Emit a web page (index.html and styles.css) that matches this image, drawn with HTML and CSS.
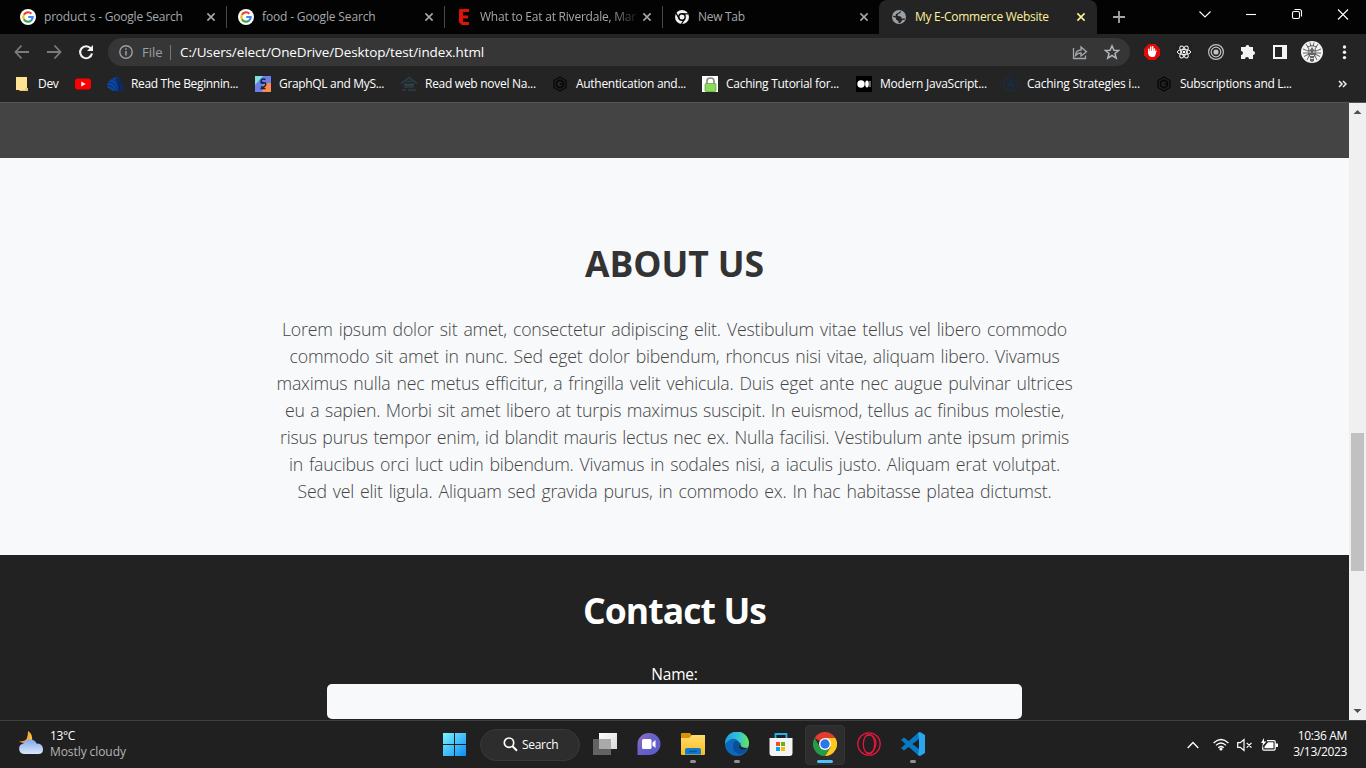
FILE: index.html
```html
<!DOCTYPE html>
<html lang="en">
<head>
<meta charset="utf-8">
<title>My E-Commerce Website</title>
<link rel="stylesheet" href="styles.css">
</head>
<body>
<svg class="defs" width="0" height="0">
  <defs>
    <linearGradient id="win" x1="0" y1="0" x2="1" y2="1"><stop offset="0" stop-color="#7df3ff"/><stop offset="1" stop-color="#0a8df5"/></linearGradient>
    <linearGradient id="cloud" x1="0" y1="0" x2="0" y2="1"><stop offset="0" stop-color="#7fa9ee"/><stop offset="1" stop-color="#dbe7fb"/></linearGradient>
    <linearGradient id="moon" x1="0" y1="0" x2="1" y2="0"><stop offset="0" stop-color="#f57c0b"/><stop offset="1" stop-color="#fbc543"/></linearGradient>
    <linearGradient id="chat" x1="0" y1="0" x2="1" y2="1"><stop offset="0" stop-color="#9b6fb5"/><stop offset=".4" stop-color="#6c62c9"/><stop offset="1" stop-color="#5858cf"/></linearGradient>
    <linearGradient id="folder" x1="0" y1="0" x2="0" y2="1"><stop offset="0" stop-color="#ffdc6e"/><stop offset="1" stop-color="#fbbc1c"/></linearGradient>
    <linearGradient id="edge" x1="0" y1="0" x2="1" y2="0"><stop offset="0" stop-color="#1c9be0"/><stop offset=".6" stop-color="#35c6d3"/><stop offset="1" stop-color="#6ce84d"/></linearGradient>
    <linearGradient id="tv" x1="0" y1="0" x2="1" y2="1"><stop offset="0" stop-color="#ffffff"/><stop offset="1" stop-color="#d9d9d9"/></linearGradient>
    <symbol id="google" viewBox="0 0 16 16"><circle cx="8" cy="8" r="8" fill="#fff"/><g fill="none" stroke-width="2.2"><path d="M3.9 5.7A4.7 4.7 0 0 1 11.4 4.7" stroke="#ea4335"/><path d="M3.9 5.7A4.7 4.7 0 0 0 3.9 10.3" stroke="#fbbc05"/><path d="M3.9 10.3A4.7 4.7 0 0 0 11 11.6" stroke="#34a853"/><path d="M11 11.6A4.7 4.7 0 0 0 12.7 8H8.2" stroke="#4285f4"/></g></symbol>
    <symbol id="x" viewBox="0 0 10 10"><path d="M1.4 1.4l7.2 7.2M8.6 1.4l-7.2 7.2" stroke="currentColor" stroke-width="1.6"/></symbol>
    <symbol id="hex" viewBox="0 0 16 16"><g fill="none" stroke="#080808"><path d="M8 1l6 3.5v7L8 15l-6-3.500v-7z" stroke-width="1.3"/><path d="M8 4l3.400 2v4L8 12l-3.400-2V6z" stroke-width="1.8"/><path d="M8 8h4" stroke-width="1.4"/></g></symbol>
  </defs>
</svg>
<div class="screen">
  <header class="tabs">
    <div class="tab"><svg class="fav" width="16" height="16"><use href="#google"/></svg><span class="tab-title t1">product s - Google Search</span><svg class="close" width="10" height="10"><use href="#x"/></svg></div>
    <div class="tab"><svg class="fav" width="16" height="16"><use href="#google"/></svg><span class="tab-title t2">food - Google Search</span><svg class="close" width="10" height="10"><use href="#x"/></svg></div>
    <div class="tab"><svg class="fav" width="16" height="16" viewBox="0 0 16 16"><path d="M3 1l1-1h9v3H7v3.500h5v3H7V13h6v3H6l-3-2.500z" fill="#dc1407"/></svg><span class="tab-title t3 fade">What to Eat at Riverdale, Mar</span><svg class="close" width="10" height="10"><use href="#x"/></svg></div>
    <div class="tab last"><svg class="fav" width="16" height="16" viewBox="0 0 16 16"><circle cx="8" cy="8" r="7" fill="#f1f3f4"/><g fill="none" stroke="#050505"><circle cx="8" cy="8" r="3.2" stroke-width="1.4"/><path d="M8 4.8h6.500M5.200 9.600L2 4M10.800 9.600L7.500 15" stroke-width="1.3"/></g></svg><span class="tab-title t4">New Tab</span><svg class="close" width="10" height="10"><use href="#x"/></svg></div>
    <div class="tab active"><svg class="fav" width="16" height="16" viewBox="0 0 16 16"><circle cx="8" cy="8" r="7" fill="#9aa0a6"/><path d="M9.500 1.800q1 2-1 2.700-2 .3-2 2 .5 1 2.500.7 2 .3 1.500 2.300h3.500l-.5 1.500q-2.500-1-3 1.500l-1.500 1.500H7.500q.5-2-1-2.500-2-.3-1.500-2.500L1.800 7.500l.5-.8 2.200.5q0-3 2.500-3z" fill="#242424"/></svg><span class="tab-title t5">My E-Commerce Website</span><svg class="close" width="10" height="10"><use href="#x"/></svg></div>
    <svg class="plus" width="12" height="12" viewBox="0 0 12 12"><path d="M6 0v12M0 6h12" stroke="#a4a8ad" stroke-width="1.8"/></svg>
    <div class="win-controls">
      <svg viewBox="0 0 46 34"><path d="M17.500 11.500l5.500 5.500 5.500-5.500" /></svg>
      <svg viewBox="0 0 46 34"><path d="M18 14.500h10"/></svg>
      <svg viewBox="0 0 46 34"><rect x="18.500" y="11.500" width="7" height="7" rx="1.500"/><path d="M20.500 9.500h5q2 0 2 2v5"/></svg>
      <svg viewBox="0 0 46 34"><path d="M18 9.500l10 10M28 9.500l-10 10"/></svg>
    </div>
  </header>
  <div class="toolbar">
    <div class="nav">
      <svg viewBox="0 0 32 32"><path d="M23 16H10M15.500 9.500L9.500 16l6 6.500" fill="none" stroke="#7b7b7b" stroke-width="1.800"/></svg>
      <svg viewBox="0 0 32 32"><path d="M9 16h13M16.500 9.500l6 6.500-6 6.500" fill="none" stroke="#7b7b7b" stroke-width="1.800"/></svg>
      <svg viewBox="0 0 32 32"><path d="M20.800 12.400A6 6 0 1 0 22 17.500" fill="none" stroke="#f1f3f4" stroke-width="2.100"/><path d="M23 9v6h-6z" fill="#f1f3f4"/></svg>
    </div>
    <div class="omnibox">
      <svg width="14" height="14" viewBox="0 0 14 14"><circle cx="7" cy="7" r="6.200" fill="none" stroke="#9aa0a6" stroke-width="1.400"/><path d="M7 6v4.500M7 3.300v1.500" stroke="#9aa0a6" stroke-width="1.500"/></svg>
      <span class="scheme">File</span>
      <span class="url">C:/Users/elect/OneDrive/Desktop/test/index.html</span>
      <div class="omni-actions">
        <svg viewBox="0 0 32 32"><path d="M9.500 12v10.500h12v-3M11.500 19.500q.5-5.500 5.500-5.500v-3l5.500 4.700-5.500 4.300v-3q-3-.2-5.500 2.500z" fill="none" stroke="#a5a8ab" stroke-width="1.300"/></svg>
        <svg viewBox="0 0 32 32"><path d="M16 9.800l1.900 4.400 4.700.3-3.600 3 1.200 4.600-4.200-2.600-4.200 2.600 1.200-4.600-3.600-3 4.700-.3z" fill="none" stroke="#b4b7ba" stroke-width="1.500"/></svg>
      </div>
    </div>
    <div class="extensions">
      <svg viewBox="0 0 32 32"><path d="M12.700 8h6.600l4.700 4.700v6.600L19.300 24h-6.600L8 19.300v-6.600z" fill="#e0090b"/><path d="M12.800 17.200v-4M14.700 16v-5M16.700 16v-5.200M18.500 17v-4" stroke="#fff" stroke-width="1.500" stroke-linecap="round"/><path d="M12.100 15h7.200l1.500-.7-1.500 5.300q-.5 1.400-2 1.400h-2q-2.800-.6-3.200-4z" fill="#fff"/></svg>
      <svg viewBox="0 0 32 32"><rect x="8" y="8" width="16" height="16" fill="#202020"/><g fill="none" stroke="#f4f4f4"><ellipse cx="16" cy="16" rx="6.700" ry="2.600"/><ellipse cx="16" cy="16" rx="6.700" ry="2.600" transform="rotate(60 16 16)"/><ellipse cx="16" cy="16" rx="6.700" ry="2.600" transform="rotate(120 16 16)"/></g><circle cx="16" cy="16" r="1.300" fill="#fff"/></svg>
      <svg viewBox="0 0 32 32"><g fill="none" stroke="#c2c2c2"><circle cx="16" cy="16" r="7.400" stroke-width="1.200"/><circle cx="16" cy="16" r="4.800" stroke-width="1.200"/></g><circle cx="16" cy="16" r="2.600" fill="#c2c2c2"/></svg>
      <svg viewBox="0 0 32 32"><path d="M10 11h3.500a2 2 0 1 1 4 0H21v4a2 2 0 1 1 0 4v4h-4a2 2 0 1 0-4 0H9v-4a2 2 0 1 0 0-4v-4z" fill="#f1f3f4"/></svg>
      <svg viewBox="0 0 32 32"><path d="M9 9h14v14H9zM11 11v10h7V11z" fill="#f4f4f4" fill-rule="evenodd"/></svg>
      <svg viewBox="0 0 32 32"><circle cx="16" cy="16" r="11" fill="#f2f2f2"/><g stroke="#555" fill="none" stroke-width=".9"><path d="M10 8l3 5M22 8l-3 5M14 6.500l1 4M18 6.500l-1 4M7 13l5 2M25 13l-5 2M7 17l5 0M25 17h-5M8 20.500l4-2M24 20.500l-4-2M11 24l2-4M21 24l-2-4M11 11q5-3 10 0"/></g><path d="M12 13l2 1 2-3 2 3 2-1v6l-2 2v4l-2 1-2-1v-4l-2-2z" fill="#666"/><path d="M12.500 16H15M17 16h2.500M14 19.500h4M14.500 22.500h3" stroke="#e4e4e4"/></svg>
      <svg viewBox="0 0 32 32"><g fill="#f1f3f4"><circle cx="16.500" cy="11" r="1.700"/><circle cx="16.500" cy="16.300" r="1.700"/><circle cx="16.500" cy="21.600" r="1.700"/></g></svg>
    </div>
  </div>
  <nav class="bookmarks">
    <div class="bm b-dev"><svg viewBox="0 0 16 16"><path d="M0 1h11v13H0z" fill="#ffe395"/><path d="M9 12h3v3H4l-1-1h6z" fill="#efc968"/></svg><span>Dev</span></div>
    <div class="bm b-yt"><svg viewBox="0 0 16 16"><rect y="2.500" width="16" height="11" rx="3" fill="#f00"/><path d="M6.300 5.500v5l4.300-2.500z" fill="#fff"/></svg></div>
    <div class="bm b1"><svg viewBox="0 0 16 16"><path d="M0 9l2-4 4-3 5-1 2 4 3 5-1 5H6L0 11z" fill="#0d47a1"/><path d="M11 1l2 4 3 5-1 5h-4q1-7-3-12z" fill="#0a2a66"/><path d="M0 9.500q6 0 9 5.500M2 6q6 1 9 8M5 3q5 2 7.500 10" fill="none" stroke="#082559" stroke-width=".8"/></svg><span>Read The Beginnin...</span></div>
    <div class="bm b2"><svg viewBox="0 0 16 16"><path d="M0 0h16v16H0z" fill="#6b7fe8"/><path d="M0 0h8L0 9z" fill="#7fe0d8"/><path d="M9 7h7v9H7z" fill="#fb8b50"/><path d="M10.500 3.500q-3.500-1.300-4.300.7t2.500 2.500 1.600 3-4.300.8M5.500 7H11M5.500 12.500h5" fill="none" stroke="#14213d" stroke-width="1.400"/></svg><span>GraphQL and MyS...</span></div>
    <div class="bm b3"><svg viewBox="0 0 16 16"><path d="M0 7.500l8-6 8 6M4 7v4h8V7M1 14h4m2 0h8M5 5.500h6" fill="none" stroke="#2a3c47" stroke-width="1.700"/><path d="M4.500 8.800h7" stroke="#3a4a54" stroke-width="1.500"/></svg><span>Read web novel Na...</span></div>
    <div class="bm b4"><svg><use href="#hex"/></svg><span>Authentication and...</span></div>
    <div class="bm b5"><svg viewBox="0 0 16 16"><path d="M0 0h16v16H0z" fill="#fff"/><path d="M5 8V5q0-3 3.500-3T12 5v3" fill="none" stroke="#8a8a8a" stroke-width="1.700"/><rect x="3" y="7.500" width="11" height="8" rx="1" fill="#8ed860" stroke="#58a52c" stroke-width=".7"/></svg><span>Caching Tutorial for...</span></div>
    <div class="bm b6"><svg viewBox="0 0 16 16"><rect width="16" height="16" rx="1" fill="#000"/><circle cx="5" cy="8" r="3.700" fill="#fff"/><ellipse cx="11" cy="8" rx="1.800" ry="3.400" fill="#fff"/><path d="M14 5v6" stroke="#ccc"/></svg><span>Modern JavaScript...</span></div>
    <div class="bm b7"><svg viewBox="0 0 16 16"><g fill="none" stroke="#142f4c" stroke-width="1.300"><circle cx="8" cy="8" r="7.200" stroke-dasharray="35 4"/><path d="M4.500 12L8 4l3.500 8M6 9.500h4"/></g></svg><span>Caching Strategies i...</span></div>
    <div class="bm b8"><svg><use href="#hex"/></svg><span>Subscriptions and L...</span></div>
    <svg class="more" width="9" height="8" viewBox="0 0 9 8"><path d="M1 1l3 3-3 3M5 1l3 3-3 3" fill="none" stroke="#eee" stroke-width="1.500"/></svg>
  </nav>
  <div class="viewport">
    <main class="page">
      <div class="strip"></div>
      <section class="about">
        <h2>ABOUT US</h2>
        <p>
          <span style="width:785px">Lorem ipsum dolor sit amet, consectetur adipiscing elit. Vestibulum vitae tellus vel libero commodo</span>
          <span style="width:770px">commodo sit amet in nunc. Sed eget dolor bibendum, rhoncus nisi vitae, aliquam libero. Vivamus</span>
          <span style="width:796px">maximus nulla nec metus efficitur, a fringilla velit vehicula. Duis eget ante nec augue pulvinar ultrices</span>
          <span style="width:779px">eu a sapien. Morbi sit amet libero at turpis maximus suscipit. In euismod, tellus ac finibus molestie,</span>
          <span style="width:789px">risus purus tempor enim, id blandit mauris lectus nec ex. Nulla facilisi. Vestibulum ante ipsum primis</span>
          <span style="width:771px">in faucibus orci luct udin bibendum. Vivamus in sodales nisi, a iaculis justo. Aliquam erat volutpat.</span>
          <span style="width:754px">Sed vel elit ligula. Aliquam sed gravida purus, in commodo ex. In hac habitasse platea dictumst.</span>
        </p>
      </section>
      <section class="contact">
        <h2>Contact Us</h2>
        <label for="name">Name:</label>
        <input id="name" type="text">
      </section>
    </main>
    <div class="scrollbar">
      <svg width="17" height="17" viewBox="0 0 17 17"><path d="M4.500 11h8l-4-4z" fill="#505050"/></svg>
      <div class="thumb"></div>
      <svg width="17" height="17" viewBox="0 0 17 17"><path d="M4.500 6h8l-4 4z" fill="#505050"/></svg>
    </div>
  </div>
  <footer class="taskbar">
    <div class="weather">
      <svg width="26" height="26" viewBox="0 0 26 26"><path d="M10 1q5 3 4 10l-5 3Q3 13 1 11q6 1 8-3 1-3 1-7z" fill="url(#moon)"/><path d="M6 24a5.300 5.300 0 0 1-.5-10.500Q7 9.500 12 9.500t6.500 4q6 0 6.500 5.200T20 24z" fill="url(#cloud)"/></svg>
      <div><div class="temp">13°C</div><div class="cond">Mostly cloudy</div></div>
    </div>
    <div class="apps">
      <svg class="start" width="23" height="23" viewBox="0 0 23 23"><path d="M0 0h11v11H0zM12 0h11v11H12zM0 12h11v11H0zM12 12h11v11H12z" fill="url(#win)"/></svg>
      <div class="search"><svg width="15" height="15" viewBox="0 0 15 15"><circle cx="6" cy="5.700" r="4.700" fill="none" stroke="#fff" stroke-width="1.700"/><path d="M9.300 9l4.700 4.700" stroke="#fff" stroke-width="2"/></svg><span>Search</span></div>
      <div class="app"><svg viewBox="0 0 24 24"><path d="M6 1h18v16H6z" fill="url(#tv)"/><path d="M0 7h18v16H0z" fill="#707070" opacity=".85"/><path d="M6 7h12v10H6z" fill="#aaa"/></svg></div>
      <div class="app"><svg viewBox="0 0 24 24"><path d="M.5 23V12A11.500 11 0 1 1 12 23z" fill="url(#chat)"/><rect x="5" y="7" width="9.500" height="10" rx="1.500" fill="#fff"/><path d="M15.500 10.500l3-2.500v8l-3-2.500z" fill="#fff"/></svg></div>
      <div class="app running"><svg viewBox="0 0 24 24"><path d="M0 8V2q0-1 1-1h8l2 3v4z" fill="#d89409"/><path d="M0 6h8l3-3h13v19q0 1-1 1H1q-1 0-1-1z" fill="url(#folder)"/><path d="M4 22.500V18q0-2 2-2h12q2 0 2 2v4.500z" fill="#0f7bd0"/><path d="M8 19.500h8" stroke="#064f91" stroke-width="1.500"/></svg></div>
      <div class="app running"><svg viewBox="0 0 24 24"><circle cx="12" cy="12" r="12" fill="#0d67bb"/><path d="M0 12A12 12 0 0 1 24 11q0 6-6 6-5 0-4-3 2-3-2-6-5-4-12 4z" fill="url(#edge)"/><path d="M8 13q1-5 5-4 2 3 1 5 0 3 6 2.500l2 1Q19 22 14 22 7 20 8 13z" fill="#0a4f9d"/><path d="M14 14q1-2 .5-4 1 0 1 3t7 3q-5 3-8 0z" fill="#202020"/></svg></div>
      <div class="app"><svg viewBox="0 0 24 24"><path d="M6.500 7V2h11v5" fill="none" stroke="#22b2ea" stroke-width="1.800"/><path d="M.5 6h23v15q0 3-3 3h-17q-3 0-3-3z" fill="#f4f4f4"/><path d="M7 10h4v4H7z" fill="#f25022"/><path d="M12 10h4v4h-4z" fill="#67b217"/><path d="M7 15h4v4H7z" fill="#00a4ef"/><path d="M12 15h4v4h-4z" fill="#ffb900"/></svg></div>
      <div class="app current"><svg viewBox="0 0 24 24"><path d="M12 12L1.600 6A12 12 0 0 1 22.400 6z" fill="#e33b2e"/><path d="M12 6h10.400A12 12 0 0 1 12 24l5.500-9z" fill="#fcc91f"/><path d="M6.800 15L1.600 6A12 12 0 0 0 12 24l5-9z" fill="#259b48"/><circle cx="12" cy="12" r="6" fill="#fff"/><circle cx="12" cy="12" r="4.700" fill="#2c77e8"/></svg></div>
      <div class="app"><svg viewBox="0 0 24 24"><g fill="none" stroke="#e0163f" stroke-width="1.300"><circle cx="12" cy="12" r="11.200"/><ellipse cx="12" cy="12" rx="5.700" ry="9.700"/><path d="M9 4q7-3 9.500 4 1.500 6-2.500 11-4 4-7 1"/></g></svg></div>
      <div class="app running"><svg viewBox="0 0 24 24"><path d="M18 0v7L3 18.500 0 16zM0 8l3-2.500L18 17v7z" fill="#0879c4"/><path d="M17 1l2-1 5 3v18l-5 3-2-1 1-6V7z" fill="#28a7ee"/></svg></div>
    </div>
    <div class="tray">
      <svg class="chev" width="12" height="8" viewBox="0 0 12 8"><path d="M.7 7L6 1.500 11.300 7" fill="none" stroke="#fff" stroke-width="1.300"/></svg>
      <svg class="wifi" width="16" height="13" viewBox="0 0 16 13"><g fill="none" stroke="#fff" stroke-width="1.300"><path d="M.6 5Q8-2 15.400 5M3 7.400q5-4.700 10 0M5.300 9.700q2.700-2.500 5.400 0"/></g><circle cx="8" cy="11" r="1.600" fill="#fff"/></svg>
      <svg class="vol" width="16" height="14" viewBox="0 0 16 14"><path d="M.7 4.700h2.600L7 1.500v11L3.300 9.300H.7zM9.700 4.800l4.800 4.800M14.500 4.800L9.700 9.600" fill="none" stroke="#fff" stroke-width="1.200"/></svg>
      <svg class="bat" width="17" height="14" viewBox="0 0 17 14"><path d="M6 2.600h7q1.200 0 1.200 1.200v7q0 1.300-1.300 1.300H3q-1.300 0-1.300-1.300V8.500" fill="none" stroke="#fff" stroke-width="1.200"/><path d="M7 4.300h5.500v6H3.500V8.500zM14.500 5.500H17v3.500h-2.500zM3 0L0 5h2L1 8.500 5.500 3.500H3z" fill="#fff"/></svg>
      <div class="clock"><div class="time">10:36 AM</div><div class="date">3/13/2023</div></div>
    </div>
  </footer>
</div>
</body>
</html>
```
FILE: styles.css
```css
* { box-sizing: border-box; }
body { margin: 0; overflow: hidden; font-family: "Open Sans", "Noto Sans", sans-serif; }
svg { display: block; flex: none; }
.defs { position: absolute; }
.screen { width: 1366px; height: 768px; display: flex; flex-direction: column; background: #222; white-space: nowrap; }

.tabs { height: 34px; flex: none; display: flex; align-items: flex-start; background: #030303; padding-left: 9px; }
.tab { width: 218px; height: 34px; display: flex; align-items: center; padding-left: 11px; color: #a4a8ad; border-right: 1px solid #484848; border-image: linear-gradient(transparent 7px, #484848 7px, #484848 27px, transparent 27px) 1; }
.tab.last { width: 216px; border: 0; }
.tab.active { color: #fbf29a; background: #242424; border: 0; border-radius: 8px 8px 0 0; padding-left: 12px; }
.tab.active .close { margin-right: 11px; }
.tab.last .close { margin-right: 10px; }
.tab-title { margin-left: 8px; font-size: 12px; line-height: 34px; width: 157px; overflow: hidden; }
.close { margin-left: auto; margin-right: 10px; }
.fade { -webkit-mask-image: linear-gradient(to right, #000 130px, transparent 160px); mask-image: linear-gradient(to right, #000 130px, transparent 160px); }
.t1 { letter-spacing: -.2px; }
.t2 { letter-spacing: -.15px; }
.t3 { letter-spacing: -.22px; }
.t4 { letter-spacing: -.3px; }
.t5 { letter-spacing: -.28px; }
.plus { margin: 11px 0 0 16px; }
.win-controls { display: flex; margin-left: auto; }
.win-controls svg { width: 46px; height: 34px; fill: none; stroke: #fff; stroke-width: 1.1; }

.toolbar { height: 36px; flex: none; background: #242424; display: flex; align-items: center; padding-left: 6px; }
.nav, .extensions, .omni-actions { display: flex; }
.nav svg, .extensions svg, .omni-actions svg { width: 32px; height: 32px; }
.omnibox { width: 1022px; height: 28px; margin-left: 6px; border-radius: 14px; background: #363636; display: flex; align-items: center; padding-left: 11px; font-size: 13px; }
.scheme { margin-left: 9px; width: 29px; line-height: 15px; color: #9aa0a6; border-right: 1px solid #777; }
.url { margin-left: 9px; color: #fff; font-size: 13.5px; letter-spacing: -.12px; }
.omni-actions { margin-left: auto; margin-right: 2px; }
.extensions { margin-left: 6px; }

.bookmarks { height: 33px; flex: none; background: #242424; border-bottom: 1px solid #555; display: flex; align-items: center; padding: 0 0 4px 16px; color: #fff; font-size: 12px; }
.bm { display: flex; align-items: center; gap: 8px; }
.bm svg { width: 16px; height: 16px; }
.bm span { padding-bottom: 1px; }
.b-dev { width: 59px; gap: 6px; letter-spacing: -.3px; }
.b-yt { width: 32px; }
.b1 { width: 148px; letter-spacing: -.33px; }
.b2 { width: 146px; letter-spacing: -.33px; }
.b3 { width: 151px; letter-spacing: -.28px; }
.b4 { width: 150px; letter-spacing: -.3px; }
.b5 { width: 154px; letter-spacing: -.27px; }
.b6 { width: 147px; letter-spacing: -.22px; }
.b7 { width: 153px; letter-spacing: -.24px; }
.b8 { width: 160px; letter-spacing: -.33px; }
.more { margin: 0 19px 0 auto; }

.viewport { height: 617px; flex: none; display: flex; }
.page { width: 1349px; height: 617px; overflow: hidden; }
.strip { height: 55px; background: #444; }
.about { height: 397px; background: #f8f9fb; padding-top: 78px; text-align: center; }
h2 { margin: 0; font-size: 35.5px; line-height: 54px; font-weight: 700; }
.about h2 { color: #333; letter-spacing: -.1px; }
.about p { margin: 26px 0 0; color: #444; font-size: 17.7px; font-weight: 340; letter-spacing: -.2px; line-height: 27px; }
.about p span { display: block; margin: 0 auto; white-space: nowrap; text-align: justify; text-align-last: justify; }
.contact { height: 165px; background: #222; color: #fff; padding-top: 28px; display: flex; flex-direction: column; align-items: center; }
.contact h2 { letter-spacing: -.9px; }
.contact label { margin-top: 27px; font-size: 15.5px; letter-spacing: -.2px; line-height: 20px; }
.contact input { width: 695px; height: 35px; border: 0; border-radius: 5px; background: #f8f9fb; }
.scrollbar { width: 17px; height: 617px; background: #f0f0f0; display: flex; flex-direction: column; }
.thumb { width: 13px; height: 138px; margin: 313px 0 auto 2px; background: #c1c1c1; }

.taskbar { height: 48px; flex: none; background: #202020; border-top: 1px solid #404040; display: flex; color: #fff; font-size: 12px; line-height: 16px; }
.weather { width: 443px; display: flex; padding: 7px 0 0 18px; }
.weather svg { margin-top: 2px; }
.weather svg + div { margin-left: 6px; }
.cond { color: #b5b5b5; letter-spacing: -.08px; }
.temp { letter-spacing: -.4px; }
.apps { display: flex; align-items: center; }
.search { width: 100px; height: 32px; margin: 0 3px 0 14px; border: 1px solid #383838; border-radius: 16px; background: #2d2d2d; display: flex; align-items: center; padding-left: 22px; gap: 4px; letter-spacing: -.3px; }
.app { width: 40px; height: 40px; margin: 0 2px; display: flex; flex-direction: column; align-items: center; padding-top: 7px; border-radius: 4px; }
.app svg { width: 24px; height: 24px; }
.running::after, .current::after { content: ""; width: 6px; height: 3px; border-radius: 2px; background: #929292; margin-top: 4px; }
.current { background: #2d2d2d; border: 1px solid #333; padding-top: 6px; }
.current::after { width: 16px; background: #4cc2ff; }
.tray { margin-left: auto; margin-right: 19px; display: flex; align-items: center; }
.wifi { margin-left: 14px; }
.vol { margin-left: 8px; }
.bat { margin-left: 8px; }
.clock { width: 69px; text-align: right; margin-top: -1px; letter-spacing: -.35px; }
```
